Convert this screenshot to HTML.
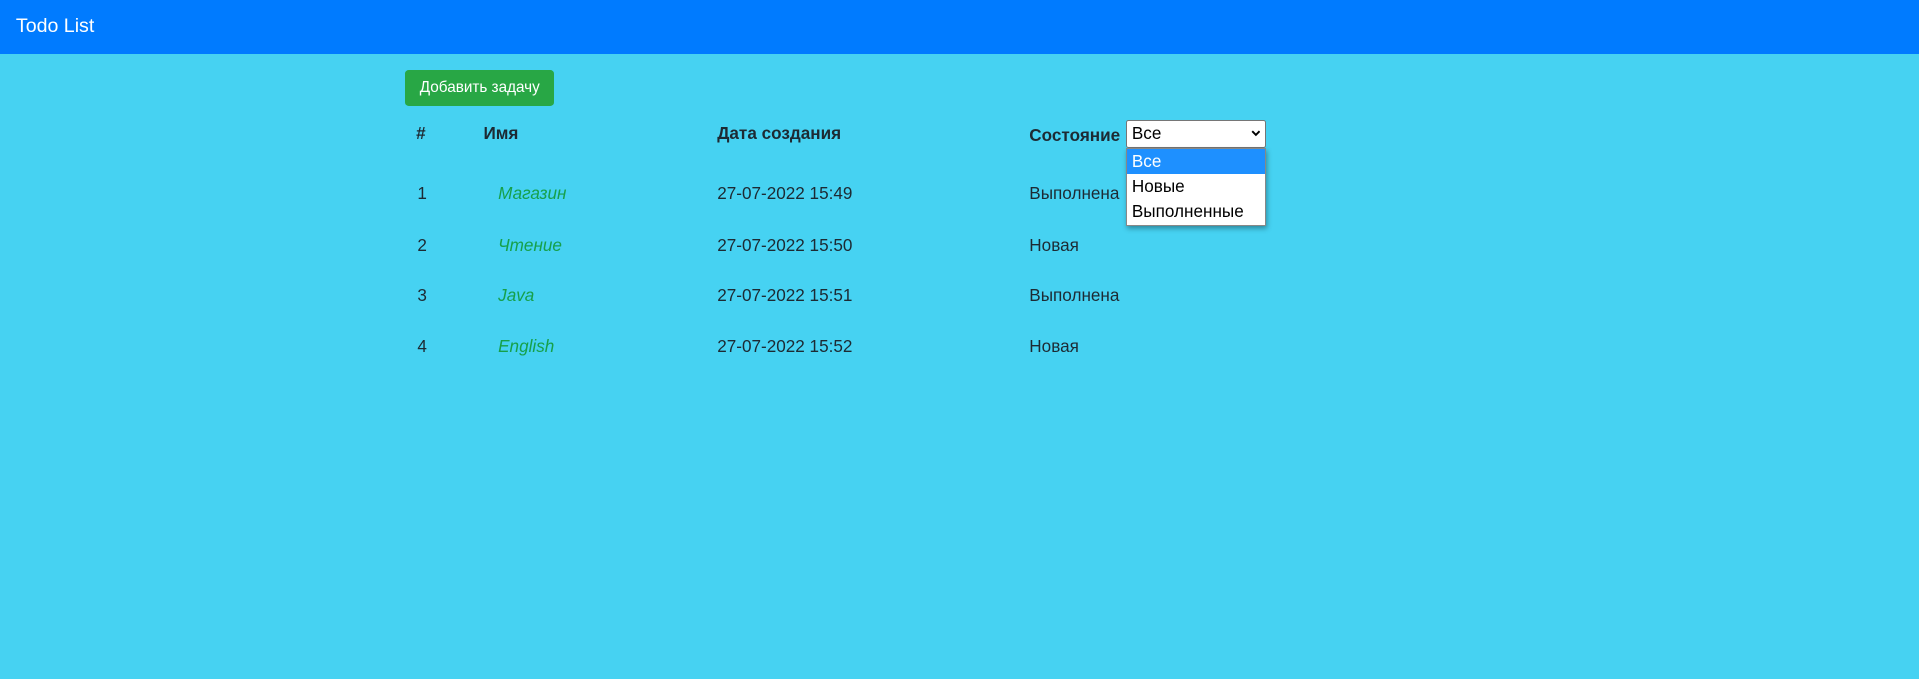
<!DOCTYPE html>
<html><head><meta charset="utf-8"><style>
html,body{margin:0;padding:0;}
body{width:1919px;height:679px;overflow:hidden;background:#46d2f2;font-family:"Liberation Sans",sans-serif;color:#1d2a33;}
#w{zoom:1.2239;width:1568px;height:555px;position:relative;}
.nav{position:absolute;left:0;top:0;width:1568px;height:44px;background:#007bff;}
.brand{position:absolute;left:13px;top:12px;color:#fff;font-size:16px;}
.btn{position:absolute;left:331px;top:57px;width:122px;height:30px;background:#28a745;border-radius:3px;color:#fff;font-size:12.5px;line-height:30px;text-align:center;}
.t{position:absolute;font-size:14px;white-space:nowrap;line-height:18px;}
.b{font-weight:bold;}
.n{font-style:italic;color:#16a04a;}
.sel{position:absolute;left:920px;top:98px;width:113px;height:21px;background:#fff;border:1px solid #767676;border-radius:2px;font-size:14px;line-height:21px;}
.sel span{margin-left:4px;color:#000;}
.sel svg{position:absolute;right:4px;top:7px;}
.dd{position:absolute;left:920px;top:121px;width:113px;height:62px;background:#fff;border:1px solid #888;box-shadow:1px 2px 4px rgba(0,0,0,.35);font-size:14px;}
.dd div{height:20.5px;line-height:20px;padding-left:4px;color:#000;}
.dd .a{background:#1e90ff;color:#fff;}
</style></head><body><div id="w">
<div class="nav"><div class="brand">Todo List</div></div>
<div class="btn">Добавить задачу</div>
<div class="t b" style="left:340px;top:100px">#</div>
<div class="t b" style="left:395px;top:100px">Имя</div>
<div class="t b" style="left:586px;top:100px">Дата создания</div>
<div class="t b" style="left:841px;top:101px">Состояние</div>
<div class="sel"><span>Все</span><svg width="8" height="6" viewBox="0 0 8 6"><path d="M1 1L4 4L7 1" stroke="#000" stroke-width="1.6" fill="none"/></svg></div>

<div class="t" style="left:341px;top:149px">1</div><div class="t n" style="left:407px;top:149px">Магазин</div><div class="t" style="left:586px;top:149px">27-07-2022 15:49</div><div class="t" style="left:841px;top:149px">Выполнена</div>
<div class="t" style="left:341px;top:191px">2</div><div class="t n" style="left:407px;top:191px">Чтение</div><div class="t" style="left:586px;top:191px">27-07-2022 15:50</div><div class="t" style="left:841px;top:191px">Новая</div>
<div class="t" style="left:341px;top:232px">3</div><div class="t n" style="left:407px;top:232px">Java</div><div class="t" style="left:586px;top:232px">27-07-2022 15:51</div><div class="t" style="left:841px;top:232px">Выполнена</div>
<div class="t" style="left:341px;top:274px">4</div><div class="t n" style="left:407px;top:274px">English</div><div class="t" style="left:586px;top:274px">27-07-2022 15:52</div><div class="t" style="left:841px;top:274px">Новая</div>

<div class="dd"><div class="a">Все</div><div>Новые</div><div>Выполненные</div></div>
</div></body></html>
